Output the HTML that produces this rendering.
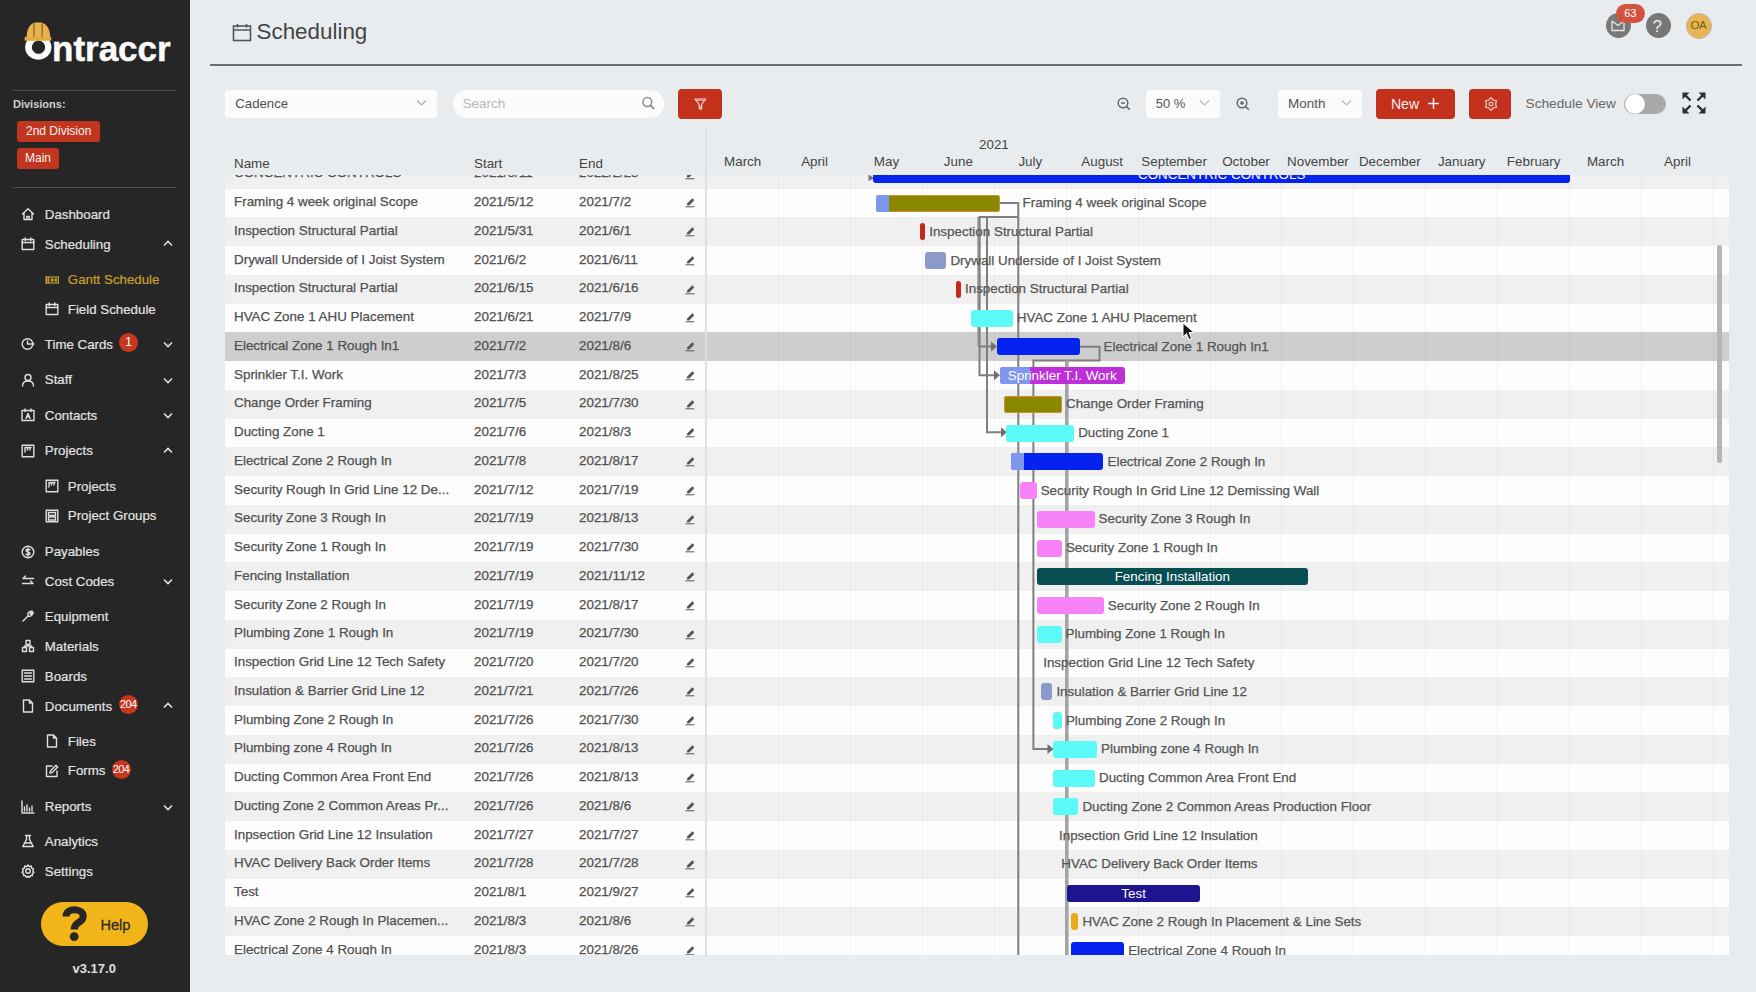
<!DOCTYPE html><html><head><meta charset="utf-8"><style>
*{box-sizing:border-box;margin:0;padding:0}
html,body{width:1756px;height:992px;overflow:hidden;background:#e9ecee;font-family:"Liberation Sans",sans-serif}
.a{position:absolute}
.t{position:absolute;white-space:nowrap;line-height:1}
#side{position:absolute;left:0;top:0;width:190px;height:992px;background:#262626}
.mi{position:absolute;left:44.8px;color:#dedede;font-size:13.3px;white-space:nowrap;line-height:16px;-webkit-text-stroke-width:0.2px}
.si{position:absolute;left:67.8px;color:#dedede;font-size:13.3px;white-space:nowrap;line-height:16px;-webkit-text-stroke-width:0.2px}
.ic{position:absolute}
.chev{position:absolute;left:163px}
.badge{position:absolute;background:#c8361f;border-radius:50%;color:#fff;font-size:11px;text-align:center;line-height:19px;width:19px;height:19px;letter-spacing:-0.6px}
.row{position:absolute;height:28.75px}
.cell{position:absolute;font-size:13.4px;color:#505050;white-space:nowrap;line-height:16px;-webkit-text-stroke-width:0.25px}
.lbl{position:absolute;font-size:13.4px;color:#555;white-space:nowrap;line-height:16px;-webkit-text-stroke-width:0.25px}
.bar{position:absolute;height:17px;border-radius:3px;overflow:hidden}
.inb{position:absolute;font-size:13.4px;color:#fff;white-space:nowrap;line-height:17px;text-align:center;top:0}
.hdr{position:absolute;font-size:13.4px;color:#444;white-space:nowrap;line-height:16px}
</style></head><body><div id="side">
<div class="t" style="left:52px;top:30.6px;font-size:35px;font-weight:700;color:#fbfbfb;-webkit-text-stroke:0.5px #fbfbfb">ntraccr</div>
<svg class="a" style="left:0;top:0" width="70" height="70" viewBox="0 0 70 70">
<path fill-rule="evenodd" fill="#fbfbfb" d="M38.3 34.6 A13.2 12.6 0 1 1 38.29 34.6 Z M38.5 40.6 A6.6 6.6 0 1 0 38.51 40.6 Z"/>
<path d="M26.6 37.4 C26.8 29 30 23.2 35.5 22.6 L40.8 22.6 C46.5 23.2 50 29 50.3 37.4 Z" fill="#e8b24e"/>
<rect x="24.6" y="36.8" width="26.7" height="4" rx="1" fill="#e3aa44"/>
<rect x="33.3" y="23.5" width="1.3" height="13.5" fill="#8a6a28"/>
<rect x="41.5" y="23.5" width="1.3" height="13.5" fill="#8a6a28"/>
</svg>
<div class="a" style="left:13px;top:90px;width:163px;height:1px;background:#4a4a4a"></div>
<div class="t" style="left:13px;top:99px;font-size:11px;font-weight:700;color:#cfcfcf">Divisions:</div>
<div class="a" style="left:17px;top:121px;width:83px;height:21px;background:#c2361f;border-radius:3px;color:#f2f2f2;font-size:12px;line-height:21px;padding-left:9px;white-space:nowrap">2nd Division</div>
<div class="a" style="left:17px;top:148px;width:42px;height:21px;background:#c2361f;border-radius:3px;color:#f2f2f2;font-size:12px;line-height:21px;padding-left:8px;white-space:nowrap">Main</div>
<div class="a" style="left:13px;top:186.5px;width:163px;height:1.5px;background:#4a4a4a"></div>
<div class="mi" style="top:207.1px;color:#e2e2e2">Dashboard</div>
<svg class="ic" style="left:21px;top:207.4px" width="14" height="14" viewBox="0 0 14 14"><path d="M1.5 7 L7 1.8 L12.5 7 M3 5.8 V12.5 H11 V5.8 M5.8 12.5 V9.5 H8.2 V12.5" fill="none" stroke="#e0e0e0" stroke-width="1.4" stroke-linejoin="round" stroke-linecap="round"/></svg>
<div class="mi" style="top:237.0px;color:#e2e2e2">Scheduling</div>
<svg class="ic" style="left:21px;top:237.3px" width="14" height="14" viewBox="0 0 14 14"><rect x="1.2" y="2.5" width="11.6" height="10" fill="none" stroke="#e0e0e0" stroke-width="1.4" stroke-linejoin="round" stroke-linecap="round"/><path d="M1.2 5.5 H12.8 M4.2 1 V3.5 M9.8 1 V3.5" fill="none" stroke="#e0e0e0" stroke-width="1.4" stroke-linejoin="round" stroke-linecap="round"/></svg>
<svg class="chev" style="top:240.3px" width="10" height="7" viewBox="0 0 10 7"><path d="M1 5.5 L5 1.5 L9 5.5" fill="none" stroke="#e0e0e0" stroke-width="1.6"/></svg>
<div class="si" style="top:272.4px;color:#c9a030">Gantt Schedule</div>
<svg class="ic" style="left:45px;top:272.7px" width="14" height="14" viewBox="0 0 14 14"><rect x="0.5" y="3" width="2" height="8" fill="#c9a030"/><rect x="3.5" y="4" width="10" height="6" fill="none" stroke="#c9a030" stroke-width="1.2"/><rect x="5.5" y="5.5" width="3" height="3" fill="#c9a030"/><rect x="9.5" y="5.5" width="2.5" height="3" fill="#c9a030"/></svg>
<div class="si" style="top:301.8px;color:#e2e2e2">Field Schedule</div>
<svg class="ic" style="left:45px;top:302.1px" width="14" height="14" viewBox="0 0 14 14"><rect x="1.2" y="2.5" width="11.6" height="10" fill="none" stroke="#e0e0e0" stroke-width="1.4" stroke-linejoin="round" stroke-linecap="round"/><path d="M1.2 5.5 H12.8 M4.2 1 V3.5 M9.8 1 V3.5" fill="none" stroke="#e0e0e0" stroke-width="1.4" stroke-linejoin="round" stroke-linecap="round"/></svg>
<div class="mi" style="top:337.1px;color:#e2e2e2">Time Cards</div>
<svg class="ic" style="left:21px;top:337.4px" width="14" height="14" viewBox="0 0 14 14"><circle cx="6.5" cy="7" r="5.3" fill="none" stroke="#e0e0e0" stroke-width="1.4" stroke-linejoin="round" stroke-linecap="round"/><path d="M6.5 4 V7 H9 M10 7 H13" fill="none" stroke="#e0e0e0" stroke-width="1.4" stroke-linejoin="round" stroke-linecap="round"/></svg>
<svg class="chev" style="top:341.4px" width="10" height="7" viewBox="0 0 10 7"><path d="M1 1.5 L5 5.5 L9 1.5" fill="none" stroke="#e0e0e0" stroke-width="1.6"/></svg>
<div class="badge" style="left:118.7px;top:333.2px;font-size:12px">1</div>
<div class="mi" style="top:372.4px;color:#e2e2e2">Staff</div>
<svg class="ic" style="left:21px;top:372.7px" width="14" height="14" viewBox="0 0 14 14"><circle cx="7" cy="4.5" r="3" fill="none" stroke="#e0e0e0" stroke-width="1.4" stroke-linejoin="round" stroke-linecap="round"/><path d="M1.5 13 C1.5 9.5 4 8 7 8 C10 8 12.5 9.5 12.5 13" fill="none" stroke="#e0e0e0" stroke-width="1.4" stroke-linejoin="round" stroke-linecap="round"/></svg>
<svg class="chev" style="top:376.7px" width="10" height="7" viewBox="0 0 10 7"><path d="M1 1.5 L5 5.5 L9 1.5" fill="none" stroke="#e0e0e0" stroke-width="1.6"/></svg>
<div class="mi" style="top:407.5px;color:#e2e2e2">Contacts</div>
<svg class="ic" style="left:21px;top:407.8px" width="14" height="14" viewBox="0 0 14 14"><rect x="1" y="2.5" width="12" height="10" fill="none" stroke="#e0e0e0" stroke-width="1.4" stroke-linejoin="round" stroke-linecap="round"/><path d="M4 1 V3.5 M10 1 V3.5 M5 10.5 L7 5.5 L9 10.5 M5.8 8.8 H8.2" fill="none" stroke="#e0e0e0" stroke-width="1.4" stroke-linejoin="round" stroke-linecap="round"/></svg>
<svg class="chev" style="top:411.8px" width="10" height="7" viewBox="0 0 10 7"><path d="M1 1.5 L5 5.5 L9 1.5" fill="none" stroke="#e0e0e0" stroke-width="1.6"/></svg>
<div class="mi" style="top:443.4px;color:#e2e2e2">Projects</div>
<svg class="ic" style="left:21px;top:443.7px" width="14" height="14" viewBox="0 0 14 14"><rect x="1.2" y="1.2" width="11.6" height="11.6" fill="none" stroke="#e0e0e0" stroke-width="1.4" stroke-linejoin="round" stroke-linecap="round"/><path d="M4 3.5 V8 M6.5 3.5 V6 M9 3.5 V6 M4 3.5 H10" fill="none" stroke="#e0e0e0" stroke-width="1.4" stroke-linejoin="round" stroke-linecap="round"/></svg>
<svg class="chev" style="top:446.7px" width="10" height="7" viewBox="0 0 10 7"><path d="M1 5.5 L5 1.5 L9 5.5" fill="none" stroke="#e0e0e0" stroke-width="1.6"/></svg>
<div class="si" style="top:479.0px;color:#e2e2e2">Projects</div>
<svg class="ic" style="left:45px;top:479.3px" width="14" height="14" viewBox="0 0 14 14"><rect x="1.2" y="1.2" width="11.6" height="11.6" fill="none" stroke="#e0e0e0" stroke-width="1.4" stroke-linejoin="round" stroke-linecap="round"/><path d="M4 3.5 V8 M6.5 3.5 V6 M9 3.5 V6 M4 3.5 H10" fill="none" stroke="#e0e0e0" stroke-width="1.4" stroke-linejoin="round" stroke-linecap="round"/></svg>
<div class="si" style="top:508.2px;color:#e2e2e2">Project Groups</div>
<svg class="ic" style="left:45px;top:508.5px" width="14" height="14" viewBox="0 0 14 14"><rect x="1.2" y="1.2" width="11.6" height="11.6" fill="none" stroke="#e0e0e0" stroke-width="1.4" stroke-linejoin="round" stroke-linecap="round"/><rect x="3.5" y="3.5" width="7" height="3" fill="none" stroke="#e0e0e0" stroke-width="1.4" stroke-linejoin="round" stroke-linecap="round"/><rect x="3.5" y="8" width="7" height="3" fill="none" stroke="#e0e0e0" stroke-width="1.4" stroke-linejoin="round" stroke-linecap="round"/></svg>
<div class="mi" style="top:544.3px;color:#e2e2e2">Payables</div>
<svg class="ic" style="left:21px;top:544.6px" width="14" height="14" viewBox="0 0 14 14"><circle cx="7" cy="7" r="5.8" fill="none" stroke="#e0e0e0" stroke-width="1.4" stroke-linejoin="round" stroke-linecap="round"/><path d="M9 4.8 C8.5 4 5 3.8 5 5.6 C5 7.4 9 6.6 9 8.5 C9 10.2 5.5 10 5 9.2 M7 3 V11" fill="none" stroke="#e0e0e0" stroke-width="1.4" stroke-linejoin="round" stroke-linecap="round"/></svg>
<div class="mi" style="top:573.9px;color:#e2e2e2">Cost Codes</div>
<svg class="ic" style="left:21px;top:574.2px" width="14" height="14" viewBox="0 0 14 14"><path d="M2 4.5 H12.5 M4.5 2 L2 4.5 M1.5 9.5 H12 M9.5 7 L12 9.5" fill="none" stroke="#e0e0e0" stroke-width="1.4" stroke-linejoin="round" stroke-linecap="round"/></svg>
<svg class="chev" style="top:578.2px" width="10" height="7" viewBox="0 0 10 7"><path d="M1 1.5 L5 5.5 L9 1.5" fill="none" stroke="#e0e0e0" stroke-width="1.6"/></svg>
<div class="mi" style="top:609.0px;color:#e2e2e2">Equipment</div>
<svg class="ic" style="left:21px;top:609.3px" width="14" height="14" viewBox="0 0 14 14"><path d="M2 12 L7 7 M7 7 C6 4.5 8 1.5 11 2.2 L9 4.5 L9.8 5.2 L12 3 C12.5 6 9.5 8 7 7" fill="none" stroke="#e0e0e0" stroke-width="1.4" stroke-linejoin="round" stroke-linecap="round"/></svg>
<div class="mi" style="top:639.0px;color:#e2e2e2">Materials</div>
<svg class="ic" style="left:21px;top:639.3px" width="14" height="14" viewBox="0 0 14 14"><rect x="5" y="1.5" width="4" height="4" fill="none" stroke="#e0e0e0" stroke-width="1.4" stroke-linejoin="round" stroke-linecap="round"/><rect x="1.5" y="8.5" width="4" height="4" fill="none" stroke="#e0e0e0" stroke-width="1.4" stroke-linejoin="round" stroke-linecap="round"/><rect x="8.5" y="8.5" width="4" height="4" fill="none" stroke="#e0e0e0" stroke-width="1.4" stroke-linejoin="round" stroke-linecap="round"/><path d="M7 5.5 V7 M3.5 8.5 V7 H10.5 V8.5" fill="none" stroke="#e0e0e0" stroke-width="1.4" stroke-linejoin="round" stroke-linecap="round"/></svg>
<div class="mi" style="top:668.9px;color:#e2e2e2">Boards</div>
<svg class="ic" style="left:21px;top:669.2px" width="14" height="14" viewBox="0 0 14 14"><rect x="1.2" y="1.2" width="11.6" height="11.6" fill="none" stroke="#e0e0e0" stroke-width="1.4" stroke-linejoin="round" stroke-linecap="round"/><path d="M3.5 4 H10.5 M3.5 7 H10.5 M3.5 10 H10.5" fill="none" stroke="#e0e0e0" stroke-width="1.4" stroke-linejoin="round" stroke-linecap="round"/></svg>
<div class="mi" style="top:698.5px;color:#e2e2e2">Documents</div>
<svg class="ic" style="left:21px;top:698.8px" width="14" height="14" viewBox="0 0 14 14"><path d="M2.5 1 H8.5 L11.5 4 V13 H2.5 Z M8.5 1 V4 H11.5" fill="none" stroke="#e0e0e0" stroke-width="1.4" stroke-linejoin="round" stroke-linecap="round"/></svg>
<svg class="chev" style="top:701.8px" width="10" height="7" viewBox="0 0 10 7"><path d="M1 5.5 L5 1.5 L9 5.5" fill="none" stroke="#e0e0e0" stroke-width="1.6"/></svg>
<div class="badge" style="left:118.7px;top:694.6px;font-size:11px">204</div>
<div class="si" style="top:733.8px;color:#e2e2e2">Files</div>
<svg class="ic" style="left:45px;top:734.1px" width="14" height="14" viewBox="0 0 14 14"><path d="M2.5 1 H8.5 L11.5 4 V13 H2.5 Z M8.5 1 V4 H11.5" fill="none" stroke="#e0e0e0" stroke-width="1.4" stroke-linejoin="round" stroke-linecap="round"/></svg>
<div class="si" style="top:763.2px;color:#e2e2e2">Forms</div>
<svg class="ic" style="left:45px;top:763.5px" width="14" height="14" viewBox="0 0 14 14"><path d="M7 2 H1.5 V12.5 H12 V7" fill="none" stroke="#e0e0e0" stroke-width="1.4" stroke-linejoin="round" stroke-linecap="round"/><path d="M5 9 L5.5 6.8 L11 1.3 L12.7 3 L7.2 8.5 Z" fill="none" stroke="#e0e0e0" stroke-width="1.4" stroke-linejoin="round" stroke-linecap="round"/></svg>
<div class="badge" style="left:111.5px;top:759.7px;font-size:11px">204</div>
<div class="mi" style="top:799.2px;color:#e2e2e2">Reports</div>
<svg class="ic" style="left:21px;top:799.5px" width="14" height="14" viewBox="0 0 14 14"><path d="M1 1 V13 H13 M3.5 11 V7 M6 11 V5 M8.5 11 V8 M11 11 V6" fill="none" stroke="#e0e0e0" stroke-width="1.4" stroke-linejoin="round" stroke-linecap="round"/></svg>
<svg class="chev" style="top:803.5px" width="10" height="7" viewBox="0 0 10 7"><path d="M1 1.5 L5 5.5 L9 1.5" fill="none" stroke="#e0e0e0" stroke-width="1.6"/></svg>
<div class="mi" style="top:833.9px;color:#e2e2e2">Analytics</div>
<svg class="ic" style="left:21px;top:834.2px" width="14" height="14" viewBox="0 0 14 14"><path d="M4.5 1.5 H9.5 M5.5 1.5 V5.5 L1.8 12.5 H12.2 L8.5 5.5 V1.5 M3.5 9 H10.5" fill="none" stroke="#e0e0e0" stroke-width="1.4" stroke-linejoin="round" stroke-linecap="round"/></svg>
<div class="mi" style="top:863.9px;color:#e2e2e2">Settings</div>
<svg class="ic" style="left:21px;top:864.2px" width="14" height="14" viewBox="0 0 14 14"><circle cx="7" cy="7" r="2.2" fill="none" stroke="#e0e0e0" stroke-width="1.4" stroke-linejoin="round" stroke-linecap="round"/><path d="M7 1 L8.2 2.6 L10.2 2 L10.6 4 L12.5 4.8 L11.8 6.8 L13 8.4 L11.3 9.6 L11.4 11.6 L9.4 11.8 L8.4 13.5 L7 12.2 L5.6 13.5 L4.6 11.8 L2.6 11.6 L2.7 9.6 L1 8.4 L2.2 6.8 L1.5 4.8 L3.4 4 L3.8 2 L5.8 2.6 Z" fill="none" stroke="#e0e0e0" stroke-width="1.4" stroke-linejoin="round" stroke-linecap="round"/></svg>
<div class="a" style="left:41px;top:902px;width:107px;height:44px;background:#f1b519;border-radius:22px"></div>
<svg class="a" style="left:60px;top:904px" width="30" height="40" viewBox="0 0 30 40"><path d="M6 12.5 C6 7.5 9.8 5.8 14.5 5.8 C19.5 5.8 23.2 8.5 23.2 12.5 C23.2 16 20.5 17.5 18 19 C15.8 20.3 14.3 21.8 14.3 25.5" fill="none" stroke="#262626" stroke-width="7"/><circle cx="14.2" cy="32.6" r="4.4" fill="#262626"/></svg>
<div class="t" style="left:100.5px;top:917.5px;font-size:14.5px;color:#2c2c2c;-webkit-text-stroke:0.3px #2c2c2c">Help</div>
<div class="t" style="left:72.5px;top:962px;font-size:13px;font-weight:700;color:#e0e0e0">v3.17.0</div>
</div>
<svg class="a" style="left:232px;top:23px" width="20" height="19" viewBox="0 0 20 19"><rect x="1.5" y="3" width="17" height="14.5" fill="none" stroke="#555" stroke-width="1.6"/><path d="M1.5 7 H18.5 M5.5 1 V4.5 M14.5 1 V4.5" stroke="#555" stroke-width="1.6"/></svg>
<div class="t" style="left:256.5px;top:21px;font-size:22.4px;color:#444">Scheduling</div>
<div class="a" style="left:210px;top:64.3px;width:1532px;height:1.5px;background:#6f6f6f"></div>
<div class="a" style="left:1605.5px;top:13.3px;width:25px;height:25px;border-radius:50%;background:#797979"></div>
<svg class="a" style="left:1611px;top:19px" width="14" height="13" viewBox="0 0 14 13"><path d="M1 2 L7 6.5 L13 2 M1 2 V11.5 H13 V2" fill="none" stroke="#e8e8e8" stroke-width="1.3"/></svg>
<div class="a" style="left:1615.5px;top:3.6px;width:29.5px;height:19px;border-radius:10px;background:#d3523f;color:#fff;font-size:11px;line-height:19px;text-align:center">63</div>
<div class="a" style="left:1645.8px;top:13px;width:25.2px;height:25.2px;border-radius:50%;background:#777"></div>
<div class="t" style="left:1652.5px;top:17.5px;font-size:17px;color:#eee">?</div>
<div class="a" style="left:1685.7px;top:12.5px;width:26px;height:26px;border-radius:50%;background:#e8b552;border:1px solid #b8b0c0"></div>
<div class="t" style="left:1690.5px;top:20px;font-size:11.5px;color:#6b5d22;letter-spacing:-0.5px">OA</div>
<div class="a" style="left:225px;top:90.2px;width:211.5px;height:27.8px;background:#fbfbfb;border-radius:4px"></div>
<div class="t" style="left:235.3px;top:97px;font-size:13.2px;color:#505050">Cadence</div>
<svg class="a" style="left:416px;top:99px" width="11" height="8" viewBox="0 0 11 8"><path d="M1 1.5 L5.5 6 L10 1.5" fill="none" stroke="#aaa" stroke-width="1.2"/></svg>
<div class="a" style="left:453px;top:89.6px;width:210.5px;height:28.5px;background:#fbfbfb;border-radius:14px"></div>
<div class="t" style="left:462.5px;top:96.5px;font-size:13.5px;color:#b8b8b8">Search</div>
<svg class="a" style="left:641px;top:96px" width="15" height="15" viewBox="0 0 15 15"><circle cx="6.3" cy="6" r="4.4" fill="none" stroke="#8c8c8c" stroke-width="1.5"/><path d="M9.5 9.3 L13.2 12.8" stroke="#8c8c8c" stroke-width="1.8"/></svg>
<div class="a" style="left:678px;top:88.6px;width:43.5px;height:30.7px;background:#c3301c;border-radius:4px"></div>
<svg class="a" style="left:694px;top:97.8px" width="13" height="12" viewBox="0 0 13 12"><path d="M1 1 H11.8 L7.6 6.3 V10.8 H5.2 V6.3 Z" fill="none" stroke="#f3d6d0" stroke-width="1.2" stroke-linejoin="round"/><path d="M2.5 2.3 H10.3" stroke="#f3d6d0" stroke-width="0.8"/><rect x="5.9" y="8" width="1" height="1.5" fill="#f3d6d0"/></svg>
<svg class="a" style="left:1116.5px;top:97px" width="14" height="14" viewBox="0 0 14 14"><circle cx="6" cy="6" r="4.8" fill="none" stroke="#666" stroke-width="1.5"/><path d="M4 6 H8" stroke="#666" stroke-width="1.5"/><path d="M9.5 9.5 L12.8 12.8" stroke="#666" stroke-width="1.6"/></svg>
<div class="a" style="left:1145.5px;top:90px;width:74px;height:28.3px;background:#fbfbfb;border-radius:4px"></div>
<div class="t" style="left:1155.8px;top:97px;font-size:13px;color:#555">50 %</div>
<svg class="a" style="left:1198.5px;top:99px" width="11" height="8" viewBox="0 0 11 8"><path d="M1 1.5 L5.5 6 L10 1.5" fill="none" stroke="#bbb" stroke-width="1.2"/></svg>
<svg class="a" style="left:1235.5px;top:97px" width="14" height="14" viewBox="0 0 14 14"><circle cx="6" cy="6" r="4.8" fill="none" stroke="#666" stroke-width="1.5"/><path d="M4 6 H8 M6 4 V8" stroke="#666" stroke-width="1.5"/><path d="M9.5 9.5 L12.8 12.8" stroke="#666" stroke-width="1.6"/></svg>
<div class="a" style="left:1277.8px;top:90px;width:84px;height:28.3px;background:#fbfbfb;border-radius:4px"></div>
<div class="t" style="left:1288px;top:96.5px;font-size:13.5px;color:#555">Month</div>
<svg class="a" style="left:1340.5px;top:99px" width="11" height="8" viewBox="0 0 11 8"><path d="M1 1.5 L5.5 6 L10 1.5" fill="none" stroke="#bbb" stroke-width="1.2"/></svg>
<div class="a" style="left:1376.4px;top:89px;width:78.3px;height:30px;background:#c3301c;border-radius:4px"></div>
<div class="t" style="left:1391px;top:96.5px;font-size:14px;color:#fbeeee">New</div>
<svg class="a" style="left:1427px;top:97px" width="13" height="13" viewBox="0 0 13 13"><path d="M6.5 1 V12 M1 6.5 H12" stroke="#fbeeee" stroke-width="1.5"/></svg>
<div class="a" style="left:1468.7px;top:89px;width:42.8px;height:30px;background:#c3301c;border-radius:4px"></div>
<svg class="a" style="left:1483.5px;top:96.5px" width="14" height="14" viewBox="0 0 14 14"><path d="M7.00 0.60 L9.30 3.02 L12.54 3.80 L11.60 7.00 L12.54 10.20 L9.30 10.98 L7.00 13.40 L4.70 10.98 L1.46 10.20 L2.40 7.00 L1.46 3.80 L4.70 3.02 Z" fill="none" stroke="#efc4bc" stroke-width="1.3" stroke-linejoin="round"/><circle cx="7" cy="7" r="1.9" fill="none" stroke="#efc4bc" stroke-width="1.2"/></svg>
<div class="t" style="left:1525.5px;top:96.8px;font-size:13.7px;color:#666">Schedule View</div>
<div class="a" style="left:1624px;top:93.6px;width:42.4px;height:20.7px;background:#a9a9a9;border-radius:10.5px"></div>
<div class="a" style="left:1625px;top:94px;width:20px;height:20px;background:#fff;border-radius:50%;box-shadow:0 0 1px #888"></div>
<svg class="a" style="left:1681px;top:91px" width="26" height="24" viewBox="0 0 26 24"><g stroke="#2e2e2e" stroke-width="2.4" fill="none"><path d="M4 4 L9.5 9.5"/><path d="M22 4 L16.5 9.5"/><path d="M4 20 L9.5 14.5"/><path d="M22 20 L16.5 14.5"/></g><g fill="#2e2e2e"><path d="M1.5 1.5 H8.5 L1.5 8.5 Z"/><path d="M24.5 1.5 H17.5 L24.5 8.5 Z"/><path d="M1.5 22.5 H8.5 L1.5 15.5 Z"/><path d="M24.5 22.5 H17.5 L24.5 15.5 Z"/></g></svg>
<div class="a" style="left:225px;top:127.5px;width:1503px;height:1px;background:#e5e8ea"></div>
<div class="a" style="left:0;top:175px;width:1756px;height:780px;overflow:hidden">
<div class="row" style="left:225px;top:-15.25px;width:479.5px;background:#f0f0f0"></div>
<div class="row" style="left:706.5px;top:-15.25px;width:1022.0px;background:#f0f0f0"></div>
<div class="cell" style="left:234px;top:-9.55px">CONCENTRIC CONTROLS</div>
<div class="cell" style="left:474px;top:-9.55px">2021/5/11</div>
<div class="cell" style="left:579px;top:-9.55px">2022/2/28</div>
<svg class="a" style="left:684.8px;top:-5.45px" width="10" height="10" viewBox="0 0 10 10"><path d="M1.8 7.3 L2.1 5.4 L6.6 0.9 C7.1 0.4 7.7 0.4 8.2 0.9 L8.7 1.4 C9.2 1.9 9.2 2.5 8.7 3 L4.2 7.5 Z" fill="#575757"/><path d="M0.5 8.8 H9.3" stroke="#575757" stroke-width="1"/></svg>
<div class="row" style="left:225px;top:13.50px;width:479.5px;background:#fdfdfd"></div>
<div class="row" style="left:706.5px;top:13.50px;width:1022.0px;background:#fdfdfd"></div>
<div class="cell" style="left:234px;top:19.20px">Framing 4 week original Scope</div>
<div class="cell" style="left:474px;top:19.20px">2021/5/12</div>
<div class="cell" style="left:579px;top:19.20px">2021/7/2</div>
<svg class="a" style="left:684.8px;top:23.30px" width="10" height="10" viewBox="0 0 10 10"><path d="M1.8 7.3 L2.1 5.4 L6.6 0.9 C7.1 0.4 7.7 0.4 8.2 0.9 L8.7 1.4 C9.2 1.9 9.2 2.5 8.7 3 L4.2 7.5 Z" fill="#575757"/><path d="M0.5 8.8 H9.3" stroke="#575757" stroke-width="1"/></svg>
<div class="row" style="left:225px;top:42.25px;width:479.5px;background:#f0f0f0"></div>
<div class="row" style="left:706.5px;top:42.25px;width:1022.0px;background:#f0f0f0"></div>
<div class="cell" style="left:234px;top:47.95px">Inspection Structural Partial</div>
<div class="cell" style="left:474px;top:47.95px">2021/5/31</div>
<div class="cell" style="left:579px;top:47.95px">2021/6/1</div>
<svg class="a" style="left:684.8px;top:52.05px" width="10" height="10" viewBox="0 0 10 10"><path d="M1.8 7.3 L2.1 5.4 L6.6 0.9 C7.1 0.4 7.7 0.4 8.2 0.9 L8.7 1.4 C9.2 1.9 9.2 2.5 8.7 3 L4.2 7.5 Z" fill="#575757"/><path d="M0.5 8.8 H9.3" stroke="#575757" stroke-width="1"/></svg>
<div class="row" style="left:225px;top:71.00px;width:479.5px;background:#fdfdfd"></div>
<div class="row" style="left:706.5px;top:71.00px;width:1022.0px;background:#fdfdfd"></div>
<div class="cell" style="left:234px;top:76.70px">Drywall Underside of I Joist System</div>
<div class="cell" style="left:474px;top:76.70px">2021/6/2</div>
<div class="cell" style="left:579px;top:76.70px">2021/6/11</div>
<svg class="a" style="left:684.8px;top:80.80px" width="10" height="10" viewBox="0 0 10 10"><path d="M1.8 7.3 L2.1 5.4 L6.6 0.9 C7.1 0.4 7.7 0.4 8.2 0.9 L8.7 1.4 C9.2 1.9 9.2 2.5 8.7 3 L4.2 7.5 Z" fill="#575757"/><path d="M0.5 8.8 H9.3" stroke="#575757" stroke-width="1"/></svg>
<div class="row" style="left:225px;top:99.75px;width:479.5px;background:#f0f0f0"></div>
<div class="row" style="left:706.5px;top:99.75px;width:1022.0px;background:#f0f0f0"></div>
<div class="cell" style="left:234px;top:105.45px">Inspection Structural Partial</div>
<div class="cell" style="left:474px;top:105.45px">2021/6/15</div>
<div class="cell" style="left:579px;top:105.45px">2021/6/16</div>
<svg class="a" style="left:684.8px;top:109.55px" width="10" height="10" viewBox="0 0 10 10"><path d="M1.8 7.3 L2.1 5.4 L6.6 0.9 C7.1 0.4 7.7 0.4 8.2 0.9 L8.7 1.4 C9.2 1.9 9.2 2.5 8.7 3 L4.2 7.5 Z" fill="#575757"/><path d="M0.5 8.8 H9.3" stroke="#575757" stroke-width="1"/></svg>
<div class="row" style="left:225px;top:128.50px;width:479.5px;background:#fdfdfd"></div>
<div class="row" style="left:706.5px;top:128.50px;width:1022.0px;background:#fdfdfd"></div>
<div class="cell" style="left:234px;top:134.20px">HVAC Zone 1 AHU Placement</div>
<div class="cell" style="left:474px;top:134.20px">2021/6/21</div>
<div class="cell" style="left:579px;top:134.20px">2021/7/9</div>
<svg class="a" style="left:684.8px;top:138.30px" width="10" height="10" viewBox="0 0 10 10"><path d="M1.8 7.3 L2.1 5.4 L6.6 0.9 C7.1 0.4 7.7 0.4 8.2 0.9 L8.7 1.4 C9.2 1.9 9.2 2.5 8.7 3 L4.2 7.5 Z" fill="#575757"/><path d="M0.5 8.8 H9.3" stroke="#575757" stroke-width="1"/></svg>
<div class="row" style="left:225px;top:157.25px;width:479.5px;background:#cecece"></div>
<div class="row" style="left:706.5px;top:157.25px;width:1022.0px;background:#cecece"></div>
<div class="cell" style="left:234px;top:162.95px">Electrical Zone 1 Rough In1</div>
<div class="cell" style="left:474px;top:162.95px">2021/7/2</div>
<div class="cell" style="left:579px;top:162.95px">2021/8/6</div>
<svg class="a" style="left:684.8px;top:167.05px" width="10" height="10" viewBox="0 0 10 10"><path d="M1.8 7.3 L2.1 5.4 L6.6 0.9 C7.1 0.4 7.7 0.4 8.2 0.9 L8.7 1.4 C9.2 1.9 9.2 2.5 8.7 3 L4.2 7.5 Z" fill="#575757"/><path d="M0.5 8.8 H9.3" stroke="#575757" stroke-width="1"/></svg>
<div class="row" style="left:225px;top:186.00px;width:479.5px;background:#fdfdfd"></div>
<div class="row" style="left:706.5px;top:186.00px;width:1022.0px;background:#fdfdfd"></div>
<div class="cell" style="left:234px;top:191.70px">Sprinkler T.I. Work</div>
<div class="cell" style="left:474px;top:191.70px">2021/7/3</div>
<div class="cell" style="left:579px;top:191.70px">2021/8/25</div>
<svg class="a" style="left:684.8px;top:195.80px" width="10" height="10" viewBox="0 0 10 10"><path d="M1.8 7.3 L2.1 5.4 L6.6 0.9 C7.1 0.4 7.7 0.4 8.2 0.9 L8.7 1.4 C9.2 1.9 9.2 2.5 8.7 3 L4.2 7.5 Z" fill="#575757"/><path d="M0.5 8.8 H9.3" stroke="#575757" stroke-width="1"/></svg>
<div class="row" style="left:225px;top:214.75px;width:479.5px;background:#f0f0f0"></div>
<div class="row" style="left:706.5px;top:214.75px;width:1022.0px;background:#f0f0f0"></div>
<div class="cell" style="left:234px;top:220.45px">Change Order Framing</div>
<div class="cell" style="left:474px;top:220.45px">2021/7/5</div>
<div class="cell" style="left:579px;top:220.45px">2021/7/30</div>
<svg class="a" style="left:684.8px;top:224.55px" width="10" height="10" viewBox="0 0 10 10"><path d="M1.8 7.3 L2.1 5.4 L6.6 0.9 C7.1 0.4 7.7 0.4 8.2 0.9 L8.7 1.4 C9.2 1.9 9.2 2.5 8.7 3 L4.2 7.5 Z" fill="#575757"/><path d="M0.5 8.8 H9.3" stroke="#575757" stroke-width="1"/></svg>
<div class="row" style="left:225px;top:243.50px;width:479.5px;background:#fdfdfd"></div>
<div class="row" style="left:706.5px;top:243.50px;width:1022.0px;background:#fdfdfd"></div>
<div class="cell" style="left:234px;top:249.20px">Ducting Zone 1</div>
<div class="cell" style="left:474px;top:249.20px">2021/7/6</div>
<div class="cell" style="left:579px;top:249.20px">2021/8/3</div>
<svg class="a" style="left:684.8px;top:253.30px" width="10" height="10" viewBox="0 0 10 10"><path d="M1.8 7.3 L2.1 5.4 L6.6 0.9 C7.1 0.4 7.7 0.4 8.2 0.9 L8.7 1.4 C9.2 1.9 9.2 2.5 8.7 3 L4.2 7.5 Z" fill="#575757"/><path d="M0.5 8.8 H9.3" stroke="#575757" stroke-width="1"/></svg>
<div class="row" style="left:225px;top:272.25px;width:479.5px;background:#f0f0f0"></div>
<div class="row" style="left:706.5px;top:272.25px;width:1022.0px;background:#f0f0f0"></div>
<div class="cell" style="left:234px;top:277.95px">Electrical Zone 2 Rough In</div>
<div class="cell" style="left:474px;top:277.95px">2021/7/8</div>
<div class="cell" style="left:579px;top:277.95px">2021/8/17</div>
<svg class="a" style="left:684.8px;top:282.05px" width="10" height="10" viewBox="0 0 10 10"><path d="M1.8 7.3 L2.1 5.4 L6.6 0.9 C7.1 0.4 7.7 0.4 8.2 0.9 L8.7 1.4 C9.2 1.9 9.2 2.5 8.7 3 L4.2 7.5 Z" fill="#575757"/><path d="M0.5 8.8 H9.3" stroke="#575757" stroke-width="1"/></svg>
<div class="row" style="left:225px;top:301.00px;width:479.5px;background:#fdfdfd"></div>
<div class="row" style="left:706.5px;top:301.00px;width:1022.0px;background:#fdfdfd"></div>
<div class="cell" style="left:234px;top:306.70px">Security Rough In Grid Line 12 De...</div>
<div class="cell" style="left:474px;top:306.70px">2021/7/12</div>
<div class="cell" style="left:579px;top:306.70px">2021/7/19</div>
<svg class="a" style="left:684.8px;top:310.80px" width="10" height="10" viewBox="0 0 10 10"><path d="M1.8 7.3 L2.1 5.4 L6.6 0.9 C7.1 0.4 7.7 0.4 8.2 0.9 L8.7 1.4 C9.2 1.9 9.2 2.5 8.7 3 L4.2 7.5 Z" fill="#575757"/><path d="M0.5 8.8 H9.3" stroke="#575757" stroke-width="1"/></svg>
<div class="row" style="left:225px;top:329.75px;width:479.5px;background:#f0f0f0"></div>
<div class="row" style="left:706.5px;top:329.75px;width:1022.0px;background:#f0f0f0"></div>
<div class="cell" style="left:234px;top:335.45px">Security Zone 3 Rough In</div>
<div class="cell" style="left:474px;top:335.45px">2021/7/19</div>
<div class="cell" style="left:579px;top:335.45px">2021/8/13</div>
<svg class="a" style="left:684.8px;top:339.55px" width="10" height="10" viewBox="0 0 10 10"><path d="M1.8 7.3 L2.1 5.4 L6.6 0.9 C7.1 0.4 7.7 0.4 8.2 0.9 L8.7 1.4 C9.2 1.9 9.2 2.5 8.7 3 L4.2 7.5 Z" fill="#575757"/><path d="M0.5 8.8 H9.3" stroke="#575757" stroke-width="1"/></svg>
<div class="row" style="left:225px;top:358.50px;width:479.5px;background:#fdfdfd"></div>
<div class="row" style="left:706.5px;top:358.50px;width:1022.0px;background:#fdfdfd"></div>
<div class="cell" style="left:234px;top:364.20px">Security Zone 1 Rough In</div>
<div class="cell" style="left:474px;top:364.20px">2021/7/19</div>
<div class="cell" style="left:579px;top:364.20px">2021/7/30</div>
<svg class="a" style="left:684.8px;top:368.30px" width="10" height="10" viewBox="0 0 10 10"><path d="M1.8 7.3 L2.1 5.4 L6.6 0.9 C7.1 0.4 7.7 0.4 8.2 0.9 L8.7 1.4 C9.2 1.9 9.2 2.5 8.7 3 L4.2 7.5 Z" fill="#575757"/><path d="M0.5 8.8 H9.3" stroke="#575757" stroke-width="1"/></svg>
<div class="row" style="left:225px;top:387.25px;width:479.5px;background:#f0f0f0"></div>
<div class="row" style="left:706.5px;top:387.25px;width:1022.0px;background:#f0f0f0"></div>
<div class="cell" style="left:234px;top:392.95px">Fencing Installation</div>
<div class="cell" style="left:474px;top:392.95px">2021/7/19</div>
<div class="cell" style="left:579px;top:392.95px">2021/11/12</div>
<svg class="a" style="left:684.8px;top:397.05px" width="10" height="10" viewBox="0 0 10 10"><path d="M1.8 7.3 L2.1 5.4 L6.6 0.9 C7.1 0.4 7.7 0.4 8.2 0.9 L8.7 1.4 C9.2 1.9 9.2 2.5 8.7 3 L4.2 7.5 Z" fill="#575757"/><path d="M0.5 8.8 H9.3" stroke="#575757" stroke-width="1"/></svg>
<div class="row" style="left:225px;top:416.00px;width:479.5px;background:#fdfdfd"></div>
<div class="row" style="left:706.5px;top:416.00px;width:1022.0px;background:#fdfdfd"></div>
<div class="cell" style="left:234px;top:421.70px">Security Zone 2 Rough In</div>
<div class="cell" style="left:474px;top:421.70px">2021/7/19</div>
<div class="cell" style="left:579px;top:421.70px">2021/8/17</div>
<svg class="a" style="left:684.8px;top:425.80px" width="10" height="10" viewBox="0 0 10 10"><path d="M1.8 7.3 L2.1 5.4 L6.6 0.9 C7.1 0.4 7.7 0.4 8.2 0.9 L8.7 1.4 C9.2 1.9 9.2 2.5 8.7 3 L4.2 7.5 Z" fill="#575757"/><path d="M0.5 8.8 H9.3" stroke="#575757" stroke-width="1"/></svg>
<div class="row" style="left:225px;top:444.75px;width:479.5px;background:#f0f0f0"></div>
<div class="row" style="left:706.5px;top:444.75px;width:1022.0px;background:#f0f0f0"></div>
<div class="cell" style="left:234px;top:450.45px">Plumbing Zone 1 Rough In</div>
<div class="cell" style="left:474px;top:450.45px">2021/7/19</div>
<div class="cell" style="left:579px;top:450.45px">2021/7/30</div>
<svg class="a" style="left:684.8px;top:454.55px" width="10" height="10" viewBox="0 0 10 10"><path d="M1.8 7.3 L2.1 5.4 L6.6 0.9 C7.1 0.4 7.7 0.4 8.2 0.9 L8.7 1.4 C9.2 1.9 9.2 2.5 8.7 3 L4.2 7.5 Z" fill="#575757"/><path d="M0.5 8.8 H9.3" stroke="#575757" stroke-width="1"/></svg>
<div class="row" style="left:225px;top:473.50px;width:479.5px;background:#fdfdfd"></div>
<div class="row" style="left:706.5px;top:473.50px;width:1022.0px;background:#fdfdfd"></div>
<div class="cell" style="left:234px;top:479.20px">Inspection Grid Line 12 Tech Safety</div>
<div class="cell" style="left:474px;top:479.20px">2021/7/20</div>
<div class="cell" style="left:579px;top:479.20px">2021/7/20</div>
<svg class="a" style="left:684.8px;top:483.30px" width="10" height="10" viewBox="0 0 10 10"><path d="M1.8 7.3 L2.1 5.4 L6.6 0.9 C7.1 0.4 7.7 0.4 8.2 0.9 L8.7 1.4 C9.2 1.9 9.2 2.5 8.7 3 L4.2 7.5 Z" fill="#575757"/><path d="M0.5 8.8 H9.3" stroke="#575757" stroke-width="1"/></svg>
<div class="row" style="left:225px;top:502.25px;width:479.5px;background:#f0f0f0"></div>
<div class="row" style="left:706.5px;top:502.25px;width:1022.0px;background:#f0f0f0"></div>
<div class="cell" style="left:234px;top:507.95px">Insulation &amp; Barrier Grid Line 12</div>
<div class="cell" style="left:474px;top:507.95px">2021/7/21</div>
<div class="cell" style="left:579px;top:507.95px">2021/7/26</div>
<svg class="a" style="left:684.8px;top:512.05px" width="10" height="10" viewBox="0 0 10 10"><path d="M1.8 7.3 L2.1 5.4 L6.6 0.9 C7.1 0.4 7.7 0.4 8.2 0.9 L8.7 1.4 C9.2 1.9 9.2 2.5 8.7 3 L4.2 7.5 Z" fill="#575757"/><path d="M0.5 8.8 H9.3" stroke="#575757" stroke-width="1"/></svg>
<div class="row" style="left:225px;top:531.00px;width:479.5px;background:#fdfdfd"></div>
<div class="row" style="left:706.5px;top:531.00px;width:1022.0px;background:#fdfdfd"></div>
<div class="cell" style="left:234px;top:536.70px">Plumbing Zone 2 Rough In</div>
<div class="cell" style="left:474px;top:536.70px">2021/7/26</div>
<div class="cell" style="left:579px;top:536.70px">2021/7/30</div>
<svg class="a" style="left:684.8px;top:540.80px" width="10" height="10" viewBox="0 0 10 10"><path d="M1.8 7.3 L2.1 5.4 L6.6 0.9 C7.1 0.4 7.7 0.4 8.2 0.9 L8.7 1.4 C9.2 1.9 9.2 2.5 8.7 3 L4.2 7.5 Z" fill="#575757"/><path d="M0.5 8.8 H9.3" stroke="#575757" stroke-width="1"/></svg>
<div class="row" style="left:225px;top:559.75px;width:479.5px;background:#f0f0f0"></div>
<div class="row" style="left:706.5px;top:559.75px;width:1022.0px;background:#f0f0f0"></div>
<div class="cell" style="left:234px;top:565.45px">Plumbing zone 4 Rough In</div>
<div class="cell" style="left:474px;top:565.45px">2021/7/26</div>
<div class="cell" style="left:579px;top:565.45px">2021/8/13</div>
<svg class="a" style="left:684.8px;top:569.55px" width="10" height="10" viewBox="0 0 10 10"><path d="M1.8 7.3 L2.1 5.4 L6.6 0.9 C7.1 0.4 7.7 0.4 8.2 0.9 L8.7 1.4 C9.2 1.9 9.2 2.5 8.7 3 L4.2 7.5 Z" fill="#575757"/><path d="M0.5 8.8 H9.3" stroke="#575757" stroke-width="1"/></svg>
<div class="row" style="left:225px;top:588.50px;width:479.5px;background:#fdfdfd"></div>
<div class="row" style="left:706.5px;top:588.50px;width:1022.0px;background:#fdfdfd"></div>
<div class="cell" style="left:234px;top:594.20px">Ducting Common Area Front End</div>
<div class="cell" style="left:474px;top:594.20px">2021/7/26</div>
<div class="cell" style="left:579px;top:594.20px">2021/8/13</div>
<svg class="a" style="left:684.8px;top:598.30px" width="10" height="10" viewBox="0 0 10 10"><path d="M1.8 7.3 L2.1 5.4 L6.6 0.9 C7.1 0.4 7.7 0.4 8.2 0.9 L8.7 1.4 C9.2 1.9 9.2 2.5 8.7 3 L4.2 7.5 Z" fill="#575757"/><path d="M0.5 8.8 H9.3" stroke="#575757" stroke-width="1"/></svg>
<div class="row" style="left:225px;top:617.25px;width:479.5px;background:#f0f0f0"></div>
<div class="row" style="left:706.5px;top:617.25px;width:1022.0px;background:#f0f0f0"></div>
<div class="cell" style="left:234px;top:622.95px">Ducting Zone 2 Common Areas Pr...</div>
<div class="cell" style="left:474px;top:622.95px">2021/7/26</div>
<div class="cell" style="left:579px;top:622.95px">2021/8/6</div>
<svg class="a" style="left:684.8px;top:627.05px" width="10" height="10" viewBox="0 0 10 10"><path d="M1.8 7.3 L2.1 5.4 L6.6 0.9 C7.1 0.4 7.7 0.4 8.2 0.9 L8.7 1.4 C9.2 1.9 9.2 2.5 8.7 3 L4.2 7.5 Z" fill="#575757"/><path d="M0.5 8.8 H9.3" stroke="#575757" stroke-width="1"/></svg>
<div class="row" style="left:225px;top:646.00px;width:479.5px;background:#fdfdfd"></div>
<div class="row" style="left:706.5px;top:646.00px;width:1022.0px;background:#fdfdfd"></div>
<div class="cell" style="left:234px;top:651.70px">Inpsection Grid Line 12 Insulation</div>
<div class="cell" style="left:474px;top:651.70px">2021/7/27</div>
<div class="cell" style="left:579px;top:651.70px">2021/7/27</div>
<svg class="a" style="left:684.8px;top:655.80px" width="10" height="10" viewBox="0 0 10 10"><path d="M1.8 7.3 L2.1 5.4 L6.6 0.9 C7.1 0.4 7.7 0.4 8.2 0.9 L8.7 1.4 C9.2 1.9 9.2 2.5 8.7 3 L4.2 7.5 Z" fill="#575757"/><path d="M0.5 8.8 H9.3" stroke="#575757" stroke-width="1"/></svg>
<div class="row" style="left:225px;top:674.75px;width:479.5px;background:#f0f0f0"></div>
<div class="row" style="left:706.5px;top:674.75px;width:1022.0px;background:#f0f0f0"></div>
<div class="cell" style="left:234px;top:680.45px">HVAC Delivery Back Order Items</div>
<div class="cell" style="left:474px;top:680.45px">2021/7/28</div>
<div class="cell" style="left:579px;top:680.45px">2021/7/28</div>
<svg class="a" style="left:684.8px;top:684.55px" width="10" height="10" viewBox="0 0 10 10"><path d="M1.8 7.3 L2.1 5.4 L6.6 0.9 C7.1 0.4 7.7 0.4 8.2 0.9 L8.7 1.4 C9.2 1.9 9.2 2.5 8.7 3 L4.2 7.5 Z" fill="#575757"/><path d="M0.5 8.8 H9.3" stroke="#575757" stroke-width="1"/></svg>
<div class="row" style="left:225px;top:703.50px;width:479.5px;background:#fdfdfd"></div>
<div class="row" style="left:706.5px;top:703.50px;width:1022.0px;background:#fdfdfd"></div>
<div class="cell" style="left:234px;top:709.20px">Test</div>
<div class="cell" style="left:474px;top:709.20px">2021/8/1</div>
<div class="cell" style="left:579px;top:709.20px">2021/9/27</div>
<svg class="a" style="left:684.8px;top:713.30px" width="10" height="10" viewBox="0 0 10 10"><path d="M1.8 7.3 L2.1 5.4 L6.6 0.9 C7.1 0.4 7.7 0.4 8.2 0.9 L8.7 1.4 C9.2 1.9 9.2 2.5 8.7 3 L4.2 7.5 Z" fill="#575757"/><path d="M0.5 8.8 H9.3" stroke="#575757" stroke-width="1"/></svg>
<div class="row" style="left:225px;top:732.25px;width:479.5px;background:#f0f0f0"></div>
<div class="row" style="left:706.5px;top:732.25px;width:1022.0px;background:#f0f0f0"></div>
<div class="cell" style="left:234px;top:737.95px">HVAC Zone 2 Rough In Placemen...</div>
<div class="cell" style="left:474px;top:737.95px">2021/8/3</div>
<div class="cell" style="left:579px;top:737.95px">2021/8/6</div>
<svg class="a" style="left:684.8px;top:742.05px" width="10" height="10" viewBox="0 0 10 10"><path d="M1.8 7.3 L2.1 5.4 L6.6 0.9 C7.1 0.4 7.7 0.4 8.2 0.9 L8.7 1.4 C9.2 1.9 9.2 2.5 8.7 3 L4.2 7.5 Z" fill="#575757"/><path d="M0.5 8.8 H9.3" stroke="#575757" stroke-width="1"/></svg>
<div class="row" style="left:225px;top:761.00px;width:479.5px;background:#fdfdfd"></div>
<div class="row" style="left:706.5px;top:761.00px;width:1022.0px;background:#fdfdfd"></div>
<div class="cell" style="left:234px;top:766.70px">Electrical Zone 4 Rough In</div>
<div class="cell" style="left:474px;top:766.70px">2021/8/3</div>
<div class="cell" style="left:579px;top:766.70px">2021/8/26</div>
<svg class="a" style="left:684.8px;top:770.80px" width="10" height="10" viewBox="0 0 10 10"><path d="M1.8 7.3 L2.1 5.4 L6.6 0.9 C7.1 0.4 7.7 0.4 8.2 0.9 L8.7 1.4 C9.2 1.9 9.2 2.5 8.7 3 L4.2 7.5 Z" fill="#575757"/><path d="M0.5 8.8 H9.3" stroke="#575757" stroke-width="1"/></svg>
<div class="a" style="left:778.11px;top:0;width:1px;height:780px;background:rgba(0,0,0,0.035)"></div>
<div class="a" style="left:850.02px;top:0;width:1px;height:780px;background:rgba(0,0,0,0.035)"></div>
<div class="a" style="left:921.93px;top:0;width:1px;height:780px;background:rgba(0,0,0,0.035)"></div>
<div class="a" style="left:993.84px;top:0;width:1px;height:780px;background:rgba(0,0,0,0.035)"></div>
<div class="a" style="left:1065.75px;top:0;width:1px;height:780px;background:rgba(0,0,0,0.035)"></div>
<div class="a" style="left:1137.66px;top:0;width:1px;height:780px;background:rgba(0,0,0,0.035)"></div>
<div class="a" style="left:1209.57px;top:0;width:1px;height:780px;background:rgba(0,0,0,0.035)"></div>
<div class="a" style="left:1281.48px;top:0;width:1px;height:780px;background:rgba(0,0,0,0.035)"></div>
<div class="a" style="left:1353.39px;top:0;width:1px;height:780px;background:rgba(0,0,0,0.035)"></div>
<div class="a" style="left:1425.30px;top:0;width:1px;height:780px;background:rgba(0,0,0,0.035)"></div>
<div class="a" style="left:1497.21px;top:0;width:1px;height:780px;background:rgba(0,0,0,0.035)"></div>
<div class="a" style="left:1569.12px;top:0;width:1px;height:780px;background:rgba(0,0,0,0.035)"></div>
<div class="a" style="left:1641.03px;top:0;width:1px;height:780px;background:rgba(0,0,0,0.035)"></div>
<div class="a" style="left:1712.94px;top:0;width:1px;height:780px;background:rgba(0,0,0,0.035)"></div>
<svg class="a" style="left:0;top:0" width="1756" height="780" viewBox="0 175 1756 780">
<path d="M999.8 203 L1018.3 203 L1018.3 960" fill="none" stroke="#7f7f7f" stroke-width="2" stroke-linejoin="miter"/>
<path d="M978.5 217 L1018.3 217" fill="none" stroke="#7f7f7f" stroke-width="2" stroke-linejoin="miter"/>
<path d="M978.8 217 L978.8 346.5" fill="none" stroke="#a2a2a2" stroke-width="3.2" stroke-linejoin="miter"/>
<path d="M979.5 217 L979.5 375.3 L994 375.3" fill="none" stroke="#7f7f7f" stroke-width="2" stroke-linejoin="miter"/>
<path d="M979.5 346.5 L991 346.5" fill="none" stroke="#7f7f7f" stroke-width="2" stroke-linejoin="miter"/>
<path d="M991 341.5 L997 346.5 L991 351.5 Z" fill="#6f6f6f"/>
<path d="M994 370.3 L1000 375.3 L994 380.3 Z" fill="#6f6f6f"/>
<path d="M987 217 L987 432.3 L1001 432.3" fill="none" stroke="#7f7f7f" stroke-width="2" stroke-linejoin="miter"/>
<path d="M1001 427.3 L1007 432.3 L1001 437.3 Z" fill="#6f6f6f"/>
<path d="M1080.2 346.8 L1099.5 346.8 L1099.5 360.5 L1033.4 360.5 L1033.4 749 L1048 749" fill="none" stroke="#7f7f7f" stroke-width="2" stroke-linejoin="miter"/>
<path d="M1047.5 744 L1053.5 749 L1047.5 754 Z" fill="#6f6f6f"/>
<path d="M1066.8 360.5 L1066.8 960" fill="none" stroke="#a4a4a4" stroke-width="3.6" stroke-linejoin="miter"/>
<path d="M868.5 174 L874 178.5 L868.5 181 Z" fill="#777"/>
</svg>
<div class="bar" style="left:873.4px;top:-9.05px;width:696.6px;background:#0523ee;">
</div>
<div class="inb" style="left:873.4px;top:-9.05px;width:696.6px">CONCENTRIC CONTROLS</div>
<div class="bar" style="left:876.2px;top:19.70px;width:123.6px;background:#8a8800;box-shadow:inset 0 0 0 1px #c9922e;">
<div class="a" style="left:0;top:0;width:12.8px;height:17px;background:#8097f0"></div>
</div>
<div class="lbl" style="left:1022.5px;top:20.20px">Framing 4 week original Scope</div>
<div class="bar" style="left:920.0px;top:48.45px;width:5.2px;background:#c42a1c;">
</div>
<div class="lbl" style="left:929.2px;top:48.95px">Inspection Structural Partial</div>
<div class="bar" style="left:925.2px;top:77.20px;width:21.2px;background:#8b9ac8;">
</div>
<div class="lbl" style="left:950.4px;top:77.70px">Drywall Underside of I Joist System</div>
<div class="bar" style="left:956.4px;top:105.95px;width:4.6px;background:#c42a1c;">
</div>
<div class="lbl" style="left:965.0px;top:106.45px">Inspection Structural Partial</div>
<div class="bar" style="left:971.2px;top:134.70px;width:41.6px;background:#5cf9f9;">
</div>
<div class="lbl" style="left:1016.8px;top:135.20px">HVAC Zone 1 AHU Placement</div>
<div class="bar" style="left:996.8px;top:163.45px;width:83.4px;background:#0523ee;">
</div>
<div class="lbl" style="left:1103.5px;top:163.95px">Electrical Zone 1 Rough In1</div>
<div class="bar" style="left:999.5px;top:192.20px;width:125.5px;background:#bd30d8;">
<div class="a" style="left:0;top:0;width:30.5px;height:17px;background:#8097f0"></div>
</div>
<div class="inb" style="left:999.5px;top:192.20px;width:125.5px">Sprinkler T.I. Work</div>
<div class="bar" style="left:1003.9px;top:220.95px;width:58.1px;background:#8a8800;box-shadow:inset 0 0 0 1px #c9922e;">
</div>
<div class="lbl" style="left:1066.0px;top:221.45px">Change Order Framing</div>
<div class="bar" style="left:1006.3px;top:249.70px;width:67.9px;background:#5cf9f9;">
</div>
<div class="lbl" style="left:1078.2px;top:250.20px">Ducting Zone 1</div>
<div class="bar" style="left:1010.8px;top:278.45px;width:92.7px;background:#0523ee;">
<div class="a" style="left:0;top:0;width:13.2px;height:17px;background:#8097f0"></div>
</div>
<div class="lbl" style="left:1107.5px;top:278.95px">Electrical Zone 2 Rough In</div>
<div class="bar" style="left:1020.3px;top:307.20px;width:16.4px;background:#f882f8;">
</div>
<div class="lbl" style="left:1040.7px;top:307.70px">Security Rough In Grid Line 12 Demissing Wall</div>
<div class="bar" style="left:1036.7px;top:335.95px;width:57.9px;background:#f882f8;">
</div>
<div class="lbl" style="left:1098.6px;top:336.45px">Security Zone 3 Rough In</div>
<div class="bar" style="left:1036.7px;top:364.70px;width:25.2px;background:#f882f8;">
</div>
<div class="lbl" style="left:1065.9px;top:365.20px">Security Zone 1 Rough In</div>
<div class="bar" style="left:1036.7px;top:393.45px;width:271.3px;background:#074d52;">
</div>
<div class="inb" style="left:1036.7px;top:393.45px;width:271.3px">Fencing Installation</div>
<div class="bar" style="left:1036.7px;top:422.20px;width:67.1px;background:#f882f8;">
</div>
<div class="lbl" style="left:1107.8px;top:422.70px">Security Zone 2 Rough In</div>
<div class="bar" style="left:1036.7px;top:450.95px;width:24.9px;background:#5cf9f9;">
</div>
<div class="lbl" style="left:1065.6px;top:451.45px">Plumbing Zone 1 Rough In</div>
<div class="lbl" style="left:1043.2px;top:480.20px">Inspection Grid Line 12 Tech Safety</div>
<div class="bar" style="left:1040.9px;top:508.45px;width:11.5px;background:#8b9ac8;">
</div>
<div class="lbl" style="left:1056.4px;top:508.95px">Insulation &amp; Barrier Grid Line 12</div>
<div class="bar" style="left:1053.0px;top:537.20px;width:8.9px;background:#5cf9f9;">
</div>
<div class="lbl" style="left:1065.9px;top:537.70px">Plumbing Zone 2 Rough In</div>
<div class="bar" style="left:1053.0px;top:565.95px;width:44.0px;background:#5cf9f9;">
</div>
<div class="lbl" style="left:1101.0px;top:566.45px">Plumbing zone 4 Rough In</div>
<div class="bar" style="left:1053.0px;top:594.70px;width:42.0px;background:#5cf9f9;">
</div>
<div class="lbl" style="left:1099.0px;top:595.20px">Ducting Common Area Front End</div>
<div class="bar" style="left:1053.0px;top:623.45px;width:25.4px;background:#5cf9f9;">
</div>
<div class="lbl" style="left:1082.4px;top:623.95px">Ducting Zone 2 Common Areas Production Floor</div>
<div class="lbl" style="left:1059.0px;top:652.70px">Inpsection Grid Line 12 Insulation</div>
<div class="lbl" style="left:1061.3px;top:681.45px">HVAC Delivery Back Order Items</div>
<div class="bar" style="left:1066.8px;top:709.70px;width:133.7px;background:#1f1490;">
</div>
<div class="inb" style="left:1066.8px;top:709.70px;width:133.7px">Test</div>
<div class="bar" style="left:1071.4px;top:738.45px;width:7.0px;background:#eaaa1a;">
</div>
<div class="lbl" style="left:1082.4px;top:738.95px">HVAC Zone 2 Rough In Placement &amp; Line Sets</div>
<div class="bar" style="left:1071.4px;top:767.20px;width:52.8px;background:#0523ee;">
</div>
<div class="lbl" style="left:1128.2px;top:767.70px">Electrical Zone 4 Rough In</div>
</div>
<div class="a" style="left:225px;top:128.5px;width:1503px;height:46.5px;background:#e9ecee"></div>
<div class="hdr" style="left:234px;top:155.5px">Name</div>
<div class="hdr" style="left:474px;top:155.5px">Start</div>
<div class="hdr" style="left:579px;top:155.5px">End</div>
<div class="hdr" style="left:979px;top:136.8px">2021</div>
<div class="hdr" style="left:692.66px;top:153.5px;width:100px;text-align:center">March</div>
<div class="hdr" style="left:764.57px;top:153.5px;width:100px;text-align:center">April</div>
<div class="hdr" style="left:836.48px;top:153.5px;width:100px;text-align:center">May</div>
<div class="hdr" style="left:908.38px;top:153.5px;width:100px;text-align:center">June</div>
<div class="hdr" style="left:980.30px;top:153.5px;width:100px;text-align:center">July</div>
<div class="hdr" style="left:1052.20px;top:153.5px;width:100px;text-align:center">August</div>
<div class="hdr" style="left:1124.12px;top:153.5px;width:100px;text-align:center">September</div>
<div class="hdr" style="left:1196.03px;top:153.5px;width:100px;text-align:center">October</div>
<div class="hdr" style="left:1267.93px;top:153.5px;width:100px;text-align:center">November</div>
<div class="hdr" style="left:1339.85px;top:153.5px;width:100px;text-align:center">December</div>
<div class="hdr" style="left:1411.76px;top:153.5px;width:100px;text-align:center">January</div>
<div class="hdr" style="left:1483.66px;top:153.5px;width:100px;text-align:center">February</div>
<div class="hdr" style="left:1555.58px;top:153.5px;width:100px;text-align:center">March</div>
<div class="hdr" style="left:1627.49px;top:153.5px;width:100px;text-align:center">April</div>
<div class="a" style="left:704.5px;top:128.5px;width:2px;height:827px;background:#e0e0e0"></div>
<div class="a" style="left:1716.5px;top:245px;width:5px;height:218px;background:#b5b5b5;border-radius:3px"></div>
<svg class="a" style="left:1182px;top:322px" width="14" height="20" viewBox="0 0 14 20"><path d="M1 1 L1 15 L4.5 11.5 L7 17.5 L9.5 16.5 L7 10.5 L12 10.5 Z" fill="#111" stroke="#fff" stroke-width="1"/></svg></body></html>
